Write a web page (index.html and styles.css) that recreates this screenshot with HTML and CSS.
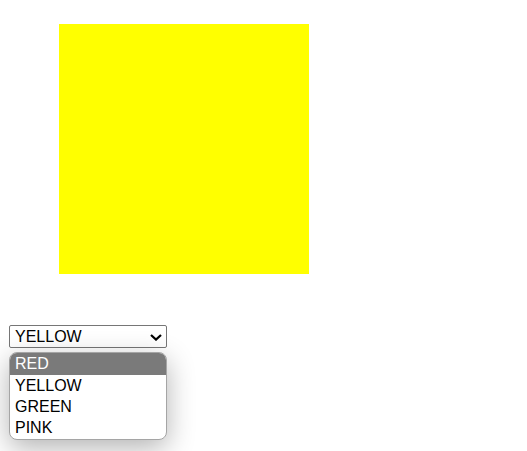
FILE: index.html
```html
<!DOCTYPE html>
<html>
<head>
<meta charset="utf-8">
<link rel="stylesheet" href="styles.css">
</head>
<body>
<div class="page">
  <div class="square"></div>
  <div class="picker">
    <div class="colors">
      <span class="value">YELLOW</span>
      <svg class="chev" width="12" height="7" viewBox="0 0 12 7"><path d="M1 1 L6 5.6 L11 1" fill="none" stroke="#000" stroke-width="2.2"/></svg>
    </div>
    <div class="popup">
      <div class="opt active">RED</div>
      <div class="opt">YELLOW</div>
      <div class="opt">GREEN</div>
      <div class="opt">PINK</div>
    </div>
  </div>
</div>
</body>
</html>
```
FILE: styles.css
```css
html, body {
  margin: 0;
  background: #fff;
}
.page {
  box-sizing: border-box;
  min-height: 451px;
  padding: 24px 0 0 9px;
  font-family: "Liberation Sans", Arial, sans-serif;
}
.square {
  width: 250px;
  height: 250px;
  margin-left: 50px;
  background: #ffff00;
}
.picker {
  margin-top: 51px;
  width: 158px;
  display: flex;
  flex-direction: column;
  gap: 4px;
}
.colors {
  box-sizing: border-box;
  display: flex;
  align-items: center;
  justify-content: space-between;
  width: 158px;
  height: 23px;
  padding: 0 4px 0 5px;
  font-size: 16px;
  color: #000;
  background: #fff;
  border: 1px solid #767676;
  border-radius: 2px;
}
.value {
  line-height: 21px;
}
.chev {
  display: block;
  margin-top: 1px;
}
.popup {
  width: 156px;
  height: 86px;
  background: #fff;
  border: 1px solid #a5a5a5;
  border-radius: 8px;
  overflow: hidden;
  box-shadow: 0 8px 28px rgba(0, 0, 0, 0.3);
}
.opt {
  height: 21px;
  line-height: 21px;
  padding: 0 5px;
  font-size: 16px;
  color: #000;
}
.opt.active {
  height: 22px;
  line-height: 22px;
  background: #7a7a7a;
  color: #fff;
}
```
